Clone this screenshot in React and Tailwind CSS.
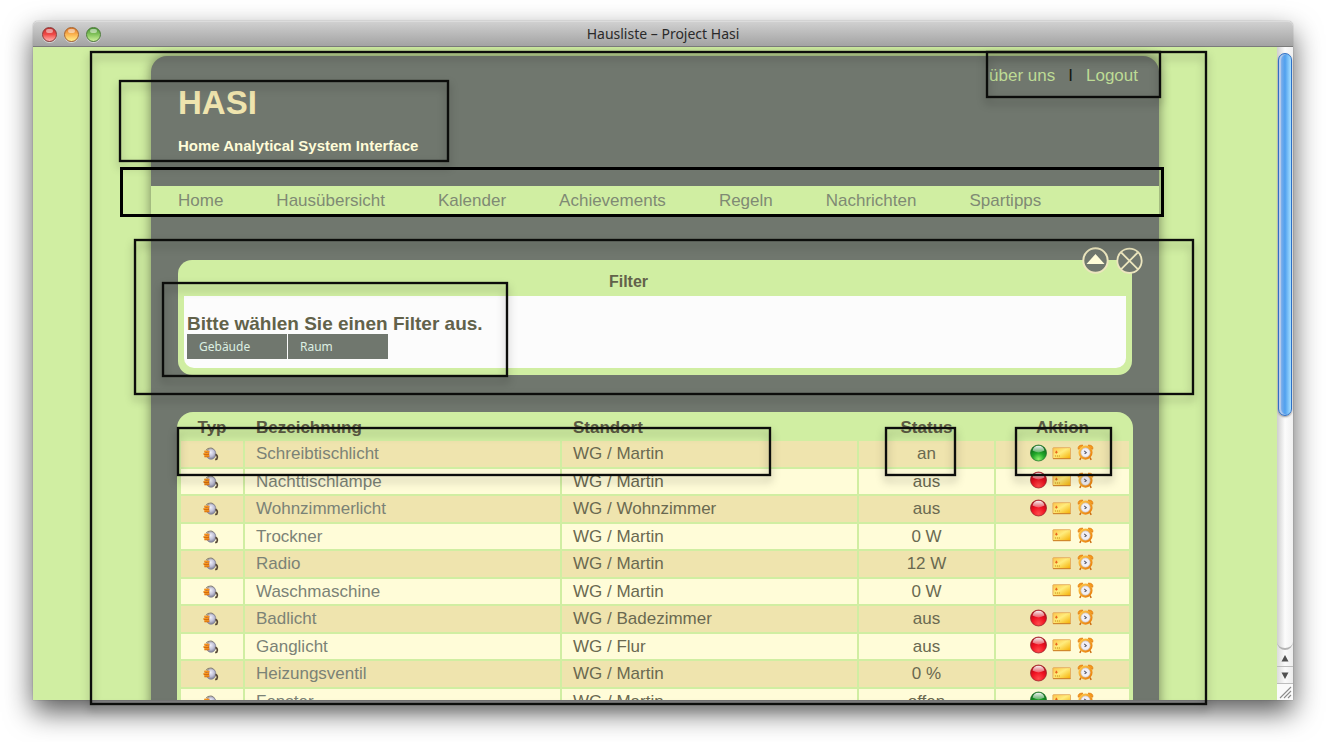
const NAV = ["Home", "Hausübersicht", "Kalender", "Achievements", "Regeln", "Nachrichten", "Spartipps"];

const DEVICES = [
  { name: "Schreibtischlicht", place: "WG / Martin", status: "an", light: "green" },
  { name: "Nachttischlampe", place: "WG / Martin", status: "aus", light: "red" },
  { name: "Wohnzimmerlicht", place: "WG / Wohnzimmer", status: "aus", light: "red" },
  { name: "Trockner", place: "WG / Martin", status: "0 W" },
  { name: "Radio", place: "WG / Martin", status: "12 W" },
  { name: "Waschmaschine", place: "WG / Martin", status: "0 W" },
  { name: "Badlicht", place: "WG / Badezimmer", status: "aus", light: "red" },
  { name: "Ganglicht", place: "WG / Flur", status: "aus", light: "red" },
  { name: "Heizungsventil", place: "WG / Martin", status: "0 %", light: "red" },
  { name: "Fenster", place: "WG / Martin", status: "offen", light: "green" },
];

function Gradients() {
  return (
    <svg width="0" height="0" className="absolute" aria-hidden="true">
      <defs>
        <radialGradient id="orb-red" cx="50%" cy="85%" r="75%">
          <stop offset="0" stopColor="#ff4a4a" />
          <stop offset="0.55" stopColor="#f01222" />
          <stop offset="1" stopColor="#b80816" />
        </radialGradient>
        <radialGradient id="orb-green" cx="50%" cy="88%" r="75%">
          <stop offset="0" stopColor="#8cf06a" />
          <stop offset="0.5" stopColor="#22a82a" />
          <stop offset="1" stopColor="#0b6c18" />
        </radialGradient>
        <linearGradient id="gloss" x1="0" y1="0" x2="0" y2="1">
          <stop offset="0" stopColor="#ffffff" stopOpacity="0.95" />
          <stop offset="1" stopColor="#ffffff" stopOpacity="0.3" />
        </linearGradient>
        <linearGradient id="ticket" x1="0" y1="0" x2="1" y2="1">
          <stop offset="0" stopColor="#fdc348" />
          <stop offset="0.45" stopColor="#ffec7c" />
          <stop offset="1" stopColor="#f5ae00" />
        </linearGradient>
        <linearGradient id="clock" x1="0" y1="0" x2="1" y2="1">
          <stop offset="0" stopColor="#ffc84a" />
          <stop offset="1" stopColor="#e87a08" />
        </linearGradient>
        <radialGradient id="plug" cx="45%" cy="35%" r="70%">
          <stop offset="0" stopColor="#f0f0fa" />
          <stop offset="0.55" stopColor="#bdbdd4" />
          <stop offset="1" stopColor="#6e6e84" />
        </radialGradient>
      </defs>
    </svg>
  );
}

function PlugIcon() {
  return (
    <svg width="16" height="14" viewBox="0 0 16 14" role="img" aria-label="Steckdose">
      <path d="M3.2 3 Q5 0.9 8 1 Q11 1.6 12 4.8" fill="none" stroke="#8a8272" strokeWidth="1.1" />
      <ellipse cx="8" cy="7" rx="4.9" ry="5.3" fill="url(#plug)" stroke="#85859a" strokeWidth="0.7" />
      <path d="M1.4 4.7h5M0.6 7h5.6M1.4 9.3h5" stroke="#d2660a" strokeWidth="1.9" />
      <path d="M1.6 4.3h4.4M0.8 6.6h4.8M1.6 8.9h4.4" stroke="#ffa01e" strokeWidth="1" />
      <path d="M12.4 7.4 Q15.4 8.6 13.8 12 L12.2 12.6" fill="none" stroke="#554634" strokeWidth="1.7" />
    </svg>
  );
}

function OrbIcon({ color }) {
  return (
    <svg width="18" height="18" viewBox="0 0 18 18" aria-hidden="true">
      <circle
        cx="9.5"
        cy="9"
        r="8"
        fill={color === "green" ? "url(#orb-green)" : "url(#orb-red)"}
        stroke={color === "green" ? "#2c7a33" : "#9a2830"}
        strokeWidth="0.8"
      />
      <path d="M3.5 6.6 Q4.5 1.7 9.5 1.7 Q14.5 1.7 15.5 6.6 Q12.5 8.4 9.5 8.4 Q6.5 8.4 3.5 6.6Z" fill="url(#gloss)" />
    </svg>
  );
}

function TicketIcon() {
  return (
    <svg width="20" height="14" viewBox="0 0 20 14" aria-hidden="true">
      <rect x="0.9" y="1.7" width="17.6" height="11" rx="0.6" fill="url(#ticket)" stroke="#e3a95c" strokeWidth="0.9" />
      <path d="M1 12.6h17.6" stroke="#cf8428" strokeWidth="1" />
      <path d="M4.4 4.8v2.8M3.1 6.2h2.6" stroke="#e8641c" strokeWidth="1.1" />
      <path d="M2.8 10h5" stroke="#c98a10" strokeWidth="1" strokeDasharray="1.2 0.8" />
    </svg>
  );
}

function ClockIcon() {
  return (
    <svg width="17" height="17" viewBox="0 0 17 17" aria-hidden="true">
      <path d="M4 13.5 L2.8 15.8 M13 13.5 L14.2 15.8" stroke="#c96a10" strokeWidth="1.5" />
      <path d="M1.2 5.2 Q0.6 1 5.8 1.1 L4.6 3.6Z M15.8 5.2 Q16.4 1 11.2 1.1 L12.4 3.6Z" fill="#f79a1c" stroke="#e07c10" strokeWidth="0.8" />
      <circle cx="8.5" cy="8.6" r="5.9" fill="#f1eff6" stroke="url(#clock)" strokeWidth="2.3" />
      <circle cx="8.5" cy="8.6" r="4.6" fill="none" stroke="#c5b6a6" strokeWidth="0.6" />
      <path d="M7.2 6.8 L9.3 8.6 L7.6 9.8" fill="none" stroke="#5a5a66" strokeWidth="1.1" />
    </svg>
  );
}

function Frame({ className }) {
  return <div aria-hidden="true" className={`pointer-events-none absolute z-10 ${className}`} />;
}

const SOFT =
  "border-2 border-[#0c0d0b] shadow-[0_0_1px_#0c0d0b,inset_0_0_1px_#0c0d0b,inset_0_0_1px_#0c0d0b] drop-shadow-[0_5px_4px_rgba(0,0,0,0.32)]";

function TrafficLight({ label, className }) {
  return (
    <button
      type="button"
      aria-label={label}
      className={`relative size-[15px] rounded-full border shadow-[0_1px_0_rgba(255,255,255,0.5)] ${className}`}
    >
      <span className="absolute top-px left-[3px] h-1 w-[7px] rounded-full bg-white/50" />
    </button>
  );
}

function TitleBar() {
  return (
    <div className="relative flex h-[26px] shrink-0 items-center justify-center rounded-t-[5px] border-t border-b border-t-[#dcdcdc] border-b-[#7b7b7b] bg-linear-to-b from-[#d0d0d0] to-[#a3a3a3]">
      <div className="absolute left-[9px] flex gap-[7px]">
        <TrafficLight label="Schließen" className="border-[#8c3a38] bg-linear-to-b from-[#c2302e] via-[#f04a48] to-[#ffb0b0]" />
        <TrafficLight label="Minimieren" className="border-[#a8652c] bg-linear-to-b from-[#d9742a] via-[#fbb450] to-[#fff08c]" />
        <TrafficLight label="Maximieren" className="border-[#4c7c38] bg-linear-to-b from-[#4b9436] via-[#84c45c] to-[#cdf29a]" />
      </div>
      <span className="font-['Noto_Sans',sans-serif] text-[14px] leading-6 text-[#2a2a2a]">Hausliste – Project Hasi</span>
    </div>
  );
}

function ScrollBar() {
  return (
    <div className="flex w-4 shrink-0 flex-col bg-linear-to-r from-[#dcdcdc] via-[#fafafa] to-[#ededed]" aria-hidden="true">
      <div className="min-h-0 flex-1 rounded-b-[8px] border-b-2 border-[#b4b4b4] bg-linear-to-r from-[#cfcfcf] via-[#fcfcfc] to-[#f0f0f0] px-px pt-[6px]">
        <div className="h-[61%] rounded-full border border-[#2f6fc4] bg-linear-to-r from-[#8fb4e8] via-[#4fa0ee] to-[#a6e0ff] shadow-[inset_2px_0_1px_#b9cdec,0_1px_2px_rgba(0,0,0,0.4)]" />
      </div>
      <div className="flex h-[17px] items-center justify-center border-b border-[#bdbdbd]">
        <svg width="8" height="7" viewBox="0 0 8 7"><path d="M4 0L7.5 6.5H0.5Z" fill="#505050" /></svg>
      </div>
      <div className="flex h-[17px] items-center justify-center border-b border-[#bdbdbd]">
        <svg width="8" height="7" viewBox="0 0 8 7"><path d="M4 7L7.5 0.5H0.5Z" fill="#505050" /></svg>
      </div>
      <div className="flex h-4 items-center justify-center bg-[#fafafa]">
        <svg width="14" height="14" viewBox="0 0 14 14">
          <path d="M2 13L13 2M6 13L13 6M10 13L13 10" stroke="#8c8c8c" strokeWidth="1.1" />
        </svg>
      </div>
    </div>
  );
}

function Header() {
  return (
    <header className="relative flex h-[130px] justify-between pl-[27px] pr-[21px]">
      <div className="pt-[27px] font-bold">
        <h1 className="text-[33px] leading-10 text-[#efe4ae]">HASI</h1>
        <p className="mt-[13px] text-[15px] leading-5 text-[#fffcd8]">Home Analytical System Interface</p>
      </div>
      <div className="flex gap-[13px] pt-[10px] text-[17px] leading-5 text-[#bddb95]">
        <a href="#ueber-uns">über uns</a>
        <span className="text-[#141512]">I</span>
        <a href="#logout">Logout</a>
      </div>
      <Frame className={`-left-8 top-6 h-[82px] w-[330px] ${SOFT}`} />
      <Frame className={`-right-[2px] -top-[5px] h-[47px] w-[175px] ${SOFT}`} />
    </header>
  );
}

function FilterPanel() {
  return (
    <section className="relative mx-[27px] mt-[46px] rounded-[14px] bg-[#d0eea2] px-[6px] pb-[7px]">
      <h2 className="pt-2 pr-[53px] text-center text-[16px] leading-7 font-bold text-[#62624a]">Filter</h2>
      <div className="rounded-b-[10px] bg-[#fcfcfc] px-[3px] pt-[17px] pb-[9px]">
        <p className="text-[19px] leading-[21px] font-bold text-[#62624a]">Bitte wählen Sie einen Filter aus.</p>
        <div className="flex gap-px font-['Noto_Sans',sans-serif] text-[12px] text-[#dcefe2]">
          <button type="button" className="h-[25px] w-[100px] bg-[#70776e] px-3 text-left">Gebäude</button>
          <button type="button" className="h-[25px] w-[100px] bg-[#70776e] px-3 text-left">Raum</button>
        </div>
      </div>
      <div className="absolute -top-[13px] -right-[11px] flex gap-[7px]">
        <button type="button" aria-label="Filter einklappen">
          <svg width="27" height="27" viewBox="0 0 27 27">
            <circle cx="13.5" cy="13.5" r="12.2" fill="#70776e" stroke="#ece6be" strokeWidth="2" />
            <path d="M13.5 7L22.5 17H4.5Z" fill="#fffcd8" />
          </svg>
        </button>
        <button type="button" aria-label="Filter schließen">
          <svg width="27" height="27" viewBox="0 0 27 27">
            <circle cx="13.5" cy="13.8" r="12.2" fill="#70776e" stroke="#ece6be" strokeWidth="1.8" />
            <path d="M5.2 5.5L21.8 22.1M21.8 5.5L5.2 22.1" stroke="#ece6be" strokeWidth="1.8" />
          </svg>
        </button>
      </div>
      <Frame className={`-left-11 -right-[62px] -top-[21px] -bottom-5 ${SOFT}`} />
      <Frame className={`-left-4 top-[22px] h-[95px] w-[346px] ${SOFT}`} />
    </section>
  );
}

function DeviceTable() {
  return (
    <section className="relative mx-[26px] mt-[37px] rounded-t-[16px] bg-[#d0eea2] p-[2px]">
      <table className="w-full table-fixed border-separate border-spacing-[2px] text-[17px] text-[#6a6950]">
        <colgroup>
          <col className="w-[62px]" />
          <col />
          <col className="w-[295px]" />
          <col className="w-[135px]" />
          <col className="w-[133px]" />
        </colgroup>
        <thead>
          <tr className="h-[23px] leading-[23px] text-[#5c5b44]">
            <th scope="col" className="p-0">Typ</th>
            <th scope="col" className="p-0 pl-[11px] text-left">Bezeichnung</th>
            <th scope="col" className="p-0 pl-[11px] text-left">Standort</th>
            <th scope="col" className="p-0">Status</th>
            <th scope="col" className="p-0">Aktion</th>
          </tr>
        </thead>
        <tbody>
          {DEVICES.map((d) => (
            <tr
              key={d.name}
              className="odd:h-[26px] odd:bg-[#efe4ae] odd:leading-[26px] even:h-[25px] even:bg-[#fffcd8] even:leading-[25px]"
            >
              <td className="p-0">
                <div className="flex justify-center pr-[2px]"><PlugIcon /></div>
              </td>
              <td className="p-0 pl-[11px]">
                <a href="#geraet" className="text-[#7b8276]">{d.name}</a>
              </td>
              <td className="p-0 pl-[11px]">{d.place}</td>
              <td className="p-0 text-center">{d.status}</td>
              <td className="p-0 pr-[35px]">
                <div className="flex items-center justify-end gap-[5px] pb-[3px]">
                  {d.light && (
                    <button type="button" aria-label="Schalten"><OrbIcon color={d.light} /></button>
                  )}
                  <button type="button" aria-label="Regel"><TicketIcon /></button>
                  <button type="button" aria-label="Zeitplan"><ClockIcon /></button>
                </div>
              </td>
            </tr>
          ))}
        </tbody>
      </table>
      <Frame className={`left-0 top-[15px] h-[49px] w-[594px] ${SOFT}`} />
      <Frame className={`right-[177px] top-[15px] h-[49px] w-[71px] ${SOFT}`} />
      <Frame className={`right-[21px] top-[15px] h-[49px] w-[97px] ${SOFT}`} />
    </section>
  );
}

export default function App() {
  return (
    <div className="flex h-screen flex-col overflow-hidden bg-white pt-[21px] pr-[51px] pb-[42px] pl-[33px] font-['Liberation_Sans',Arial,sans-serif]">
      <Gradients />
      <div className="relative flex min-h-0 flex-1 flex-col rounded-t-[5px] shadow-[0_12px_28px_rgba(0,0,0,0.65),0_0_1px_rgba(0,0,0,0.6)]">
        <TitleBar />
        <div className="flex min-h-0 flex-1">
          <div className="min-w-0 flex-1 overflow-hidden bg-[#d0eea2] pt-[9px]">
            <main className="mx-auto w-full max-w-[1008px] rounded-t-[16px] bg-[#70776e] pb-6 shadow-[0_0_12px_rgba(0,0,0,0.45)]">
              <Header />
              <nav className="relative bg-[#d0eea2] pl-[27px]">
                <ul className="flex gap-[53px] pt-px text-[17px] leading-[27px] text-[#7f8a74]">
                  {NAV.map((item) => (
                    <li key={item}><a href="#nav">{item}</a></li>
                  ))}
                </ul>
                <Frame className="-left-[31px] -right-[5px] -top-[19px] -bottom-[3px] border-3 border-black" />
              </nav>
              <FilterPanel />
              <DeviceTable />
            </main>
          </div>
          <ScrollBar />
        </div>
        <Frame className={`top-[30px] right-[86px] -bottom-[5px] left-[57px] ${SOFT}`} />
      </div>
    </div>
  );
}
